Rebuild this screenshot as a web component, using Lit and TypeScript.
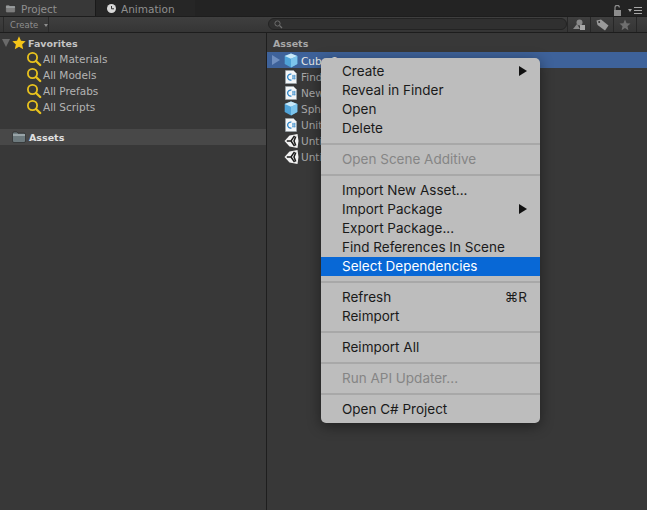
import { LitElement, css, html, svg } from 'lit'
import { customElement } from 'lit/decorators.js'

const favorites = ['All Materials', 'All Models', 'All Prefabs', 'All Scripts']

type Asset = { name: string; icon: 'cube' | 'cs' | 'unity'; selected?: boolean }

const assets: Asset[] = [
  { name: 'Cube 2', icon: 'cube', selected: true },
  { name: 'FindObjects', icon: 'cs' },
  { name: 'NewBehaviour', icon: 'cs' },
  { name: 'Sphere', icon: 'cube' },
  { name: 'UnityScript', icon: 'cs' },
  { name: 'Untitled', icon: 'unity' },
  { name: 'Untitled 2', icon: 'unity' },
]

// null = separator
type MenuItem = { label: string; disabled?: boolean; active?: boolean; arrow?: boolean; key?: string } | null

const menu: MenuItem[] = [
  { label: 'Create', arrow: true },
  { label: 'Reveal in Finder' },
  { label: 'Open' },
  { label: 'Delete' },
  null,
  { label: 'Open Scene Additive', disabled: true },
  null,
  { label: 'Import New Asset...' },
  { label: 'Import Package', arrow: true },
  { label: 'Export Package...' },
  { label: 'Find References In Scene' },
  { label: 'Select Dependencies', active: true },
  null,
  { label: 'Refresh', key: '⌘R' },
  { label: 'Reimport' },
  null,
  { label: 'Reimport All' },
  null,
  { label: 'Run API Updater...', disabled: true },
  null,
  { label: 'Open C# Project' },
]

const magnifier = html`<svg class="icon" width="16" height="16" viewBox="0 0 16 16">
  <circle cx="6.500" cy="6.500" r="4.600" fill="none" stroke="#e8c21e" stroke-width="1.800"/>
  <path d="M10 10l4.200 4" stroke="#e8c21e" stroke-width="2.400" stroke-linecap="round"/>
</svg>`

const folder = (w: number, h: number, fill: string) => svg`<svg class="icon" width=${w} height=${h} viewBox="0 0 14 12">
  <path d="M.5 2.500q0-1.500 1.500-1.500h3l1 1.200h6q1.500 0 1.500 1.300v6.500q0 1.500-1.500 1.500h-10q-1.500 0-1.500-1.500z" fill=${fill} stroke="#222" stroke-width=".6"/>
  <path d="M1 4h12" stroke="#c5cdd0" stroke-width="1"/>
</svg>`

const cube = html`<svg class="icon" width="14" height="15" viewBox="0 0 14 15">
  <path d="M7 .5l6.300 2.600v8L7 14.500.7 11.100v-8z" fill="#4fa3d8"/>
  <path d="M7 .5l6.300 2.600L7 5.800.7 3.100z" fill="#c8e8f8"/>
  <path d="M7 5.800l6.300-2.700v8L7 14.500z" fill="#7cc4ec"/>
</svg>`

const csFile = html`<svg class="icon" width="12" height="14" viewBox="0 0 12 14">
  <path d="M.5.500h8l3 3v10h-11z" fill="#f4f6f8" stroke="#9aa6ad" stroke-width=".6"/>
  <path d="M6.400 4.200a3 3 0 1 0 0 5.800" fill="none" stroke="#2e86c8" stroke-width="1.300"/>
  <path d="M7 6h3.600M7 8.200h3.600M8 4.800v4.800M9.700 4.800v4.800" stroke="#2e86c8" stroke-width=".7"/>
</svg>`

const unity = html`<svg class="icon" width="15" height="14" viewBox="0 0 15 14">
  <path d="M.5 7L5.500 1.500 13.500 0 14.500 7 13.500 14 5.500 12.500z" fill="#f2f2f2"/>
  <path d="M2.800 7H7L10.500 1.800M7 7l3.500 5.200M11.800 2.500L10 7l1.800 4.500" fill="none" stroke="#1c1c1c" stroke-width="1.500"/>
</svg>`

const assetIcons = { cube, cs: csFile, unity }

@customElement('app-root')
export class AppRoot extends LitElement {
  static styles = css`
    :host {
      display: block;
      position: relative;
      width: 647px;
      height: 510px;
      overflow: hidden;
      background: #383838;
      font-family: 'DejaVu Sans', sans-serif;
      font-size: 10.5px;
      color: #b4b4b4;
    }

    .icon {
      display: block;
      flex: none;
    }

    .tabs {
      display: flex;
      height: 16px;
      background: #232323;
    }

    .tab {
      display: flex;
      align-items: center;
      gap: 5px;
      width: 95px;
      padding: 1px 0 0 5px;
      box-sizing: border-box;
      color: #8f8f8f;
      font-size: 10.5px;
      background: #383838;
    }

    .tab.inactive {
      background: #262626;
      padding-left: 11px;
      border-left: 1px solid #1a1a1a;
      width: 100px;
    }

    .tab-tools {
      margin-left: auto;
      display: flex;
      align-items: flex-end;
      gap: 6px;
      padding-right: 5px;
    }

    .menu-lines {
      display: flex;
      align-items: center;
      gap: 2px;
      height: 8px;
      margin-bottom: 2px;
    }

    .menu-lines i {
      display: block;
      width: 8px;
      height: 5px;
      border-top: 1px solid #a8a8a8;
      border-bottom: 1px solid #a8a8a8;
      background: linear-gradient(#a8a8a8, #a8a8a8) center / 100% 1px no-repeat;
    }

    .menu-lines b {
      border: 2.500px solid transparent;
      border-top: 3px solid #a8a8a8;
      border-bottom: 0;
    }

    .toolbar {
      display: flex;
      align-items: stretch;
      height: 17px;
      box-sizing: border-box;
      background: linear-gradient(#3f3f3f, #353535);
      border-top: 1px solid #1d1d1d;
      border-bottom: 1px solid #1d1d1d;
    }

    .create {
      display: flex;
      align-items: center;
      gap: 6px;
      width: 46px;
      margin-left: 3px;
      padding-left: 6px;
      box-sizing: border-box;
      border-left: 1px solid #2a2a2a;
      border-right: 1px solid #2a2a2a;
      color: #8e8e8e;
      font-size: 8.500px;
    }

    .create i {
      border: 2.500px solid transparent;
      border-top: 3px solid #8e8e8e;
      border-bottom: 0;
      margin-top: 1px;
    }

    .search {
      display: flex;
      align-items: center;
      width: 299px;
      height: 12px;
      margin: 1px 0 0 219px;
      padding-left: 5px;
      box-sizing: border-box;
      border-radius: 7px;
      border: 1px solid #232323;
      background: #303030;
    }

    .tool {
      display: flex;
      align-items: center;
      justify-content: center;
      width: 22px;
      border-left: 1px solid #272727;
    }

    .tool:last-child {
      border-right: 1px solid #272727;
    }

    .tool:first-of-type {
      margin-left: 5px;
    }

    .body {
      display: flex;
      height: 477px;
    }

    .left {
      width: 267px;
      flex: none;
      padding-top: 2px;
      box-sizing: border-box;
      border-right: 1px solid #1e1e1e;
    }

    .row {
      display: flex;
      align-items: center;
      height: 16px;
      white-space: nowrap;
    }

    .row.favorites {
      padding-left: 2px;
      gap: 2px;
      font-weight: 700;
      font-size: 9.500px;
      color: #c4c4c4;
    }

    .triangle-down {
      border: 4px solid transparent;
      border-top: 8px solid #6a6a6a;
      border-bottom: 0;
    }

    .row.fav {
      padding-left: 26px;
      gap: 1px;
    }

    .row.root {
      margin-top: 14px;
      padding-left: 12px;
      gap: 3px;
      background: #484848;
      color: #e0e0e0;
      font-weight: 700;
      font-size: 9.500px;
    }

    .right {
      flex: 1;
      min-width: 0;
    }

    .crumb {
      height: 19px;
      padding: 4px 0 0 6px;
      box-sizing: border-box;
      line-height: 14px;
      color: #a8a8a8;
      font-weight: 700;
      font-size: 9.500px;
    }

    .asset {
      display: flex;
      align-items: center;
      gap: 3px;
      height: 16px;
      padding: 1px 0 0 17px;
      box-sizing: border-box;
      white-space: nowrap;
      color: #a6a6a6;
    }

    .slot {
      display: flex;
      justify-content: center;
      width: 14px;
      flex: none;
    }

    .asset.selected {
      position: relative;
      background: #3e629a;
      color: #e8e8e8;
    }

    .asset.selected::before {
      content: '';
      position: absolute;
      left: 5px;
      top: 3px;
      border: 5px solid transparent;
      border-left: 8px solid #6f8fc0;
      border-right: 0;
    }

    .context {
      position: absolute;
      left: 321px;
      top: 58px;
      width: 219px;
      padding: 3.500px 0 4px;
      box-sizing: border-box;
      border-radius: 5px;
      background: #bdbdbd;
      box-shadow: 0 3px 14px rgba(0, 0, 0, 0.45);
      font-family: Inter, 'Liberation Sans', sans-serif;
      font-size: 13.500px;
      color: #1a1a1a;
    }

    .item {
      display: flex;
      align-items: center;
      justify-content: space-between;
      height: 19px;
      box-sizing: border-box;
      padding: 0 13px 1px 21px;
    }

    .item.disabled {
      color: #858585;
    }

    .item.active {
      background: #0868d6;
      color: #fff;
    }

    .item i {
      border: 5px solid transparent;
      border-left: 8px solid #111;
      border-right: 0;
      margin-top: 1px;
    }

    .sep {
      height: 12px;
      display: flex;
      align-items: center;
    }

    .sep::before {
      content: '';
      flex: 1;
      height: 2px;
      background: #a8a8a8;
    }
  `

  render() {
    return html`
      <div class="tabs">
        <div class="tab">
          ${folder(11, 9, '#7d7d7d')}
          <span>Project</span>
        </div>
        <div class="tab inactive">
          <svg class="icon" width="9" height="9" viewBox="0 0 9 9">
            <circle cx="4.500" cy="4.500" r="4.500" fill="#d8d8d8"/>
            <path d="M4.500 2v2.800H7" fill="none" stroke="#333" stroke-width="1"/>
          </svg>
          <span>Animation</span>
        </div>
        <div class="tab-tools">
          <svg class="icon" width="9" height="11" viewBox="0 0 9 11">
            <rect x="1" y="5" width="7" height="6" fill="#8c8c8c"/>
            <path d="M2 5V2.500a2.200 2.200 0 0 1 4.400 0" fill="none" stroke="#8c8c8c" stroke-width="1.200"/>
          </svg>
          <div class="menu-lines"><b></b><i></i></div>
        </div>
      </div>
      <div class="toolbar">
        <div class="create"><span>Create</span><i></i></div>
        <div class="search">
          <svg class="icon" width="9" height="9" viewBox="0 0 9 9">
            <circle cx="3.500" cy="3.500" r="2.600" fill="none" stroke="#6e6e6e" stroke-width="1"/>
            <path d="M5.500 5.500L8 8" stroke="#6e6e6e" stroke-width="1.200"/>
          </svg>
        </div>
        <div class="tool">
          <svg class="icon" width="13" height="12" viewBox="0 0 13 12">
            <circle cx="6.500" cy="3.500" r="3" fill="#8a8a8a"/>
            <path d="M0 10l4-5 3 5z" fill="#8a8a8a"/>
            <rect x="7" y="6" width="5" height="5" fill="#a8a8a8"/>
          </svg>
        </div>
        <div class="tool">
          <svg class="icon" width="13" height="12" viewBox="0 0 13 12">
            <path d="M.5 1.500L5 .5l7.500 6-3.500 5L1.500 6z" fill="#9a9a9a"/>
            <circle cx="3.200" cy="3" r="1" fill="#333"/>
          </svg>
        </div>
        <div class="tool">
          <svg class="icon" width="12" height="12" viewBox="0 0 12 12">
            <path d="M6 .5l1.600 3.700 3.900.4-3 2.600.9 4L6 9.100 2.600 11.200l.9-4-3-2.600 3.900-.4z" fill="#6f6f6f"/>
          </svg>
        </div>
      </div>
      <div class="body">
        <div class="left">
          <div class="row favorites">
            <span class="triangle-down"></span>
            <svg class="icon" width="14" height="14" viewBox="0 0 12 12">
              <path d="M6 .3l1.700 3.800 4 .4-3 2.700.9 4.100L6 9.200 2.400 11.300l.9-4.100-3-2.700 4-.4z" fill="#f5c518"/>
            </svg>
            <span>Favorites</span>
          </div>
          ${favorites.map((f) => html`<div class="row fav">${magnifier}<span>${f}</span></div>`)}
          <div class="row root">
            ${folder(14, 12, '#6d7a7e')}
            <span>Assets</span>
          </div>
        </div>
        <div class="right">
          <div class="crumb">Assets</div>
          ${assets.map((a) => html`
            <div class="asset ${a.selected ? 'selected' : ''}">
              <span class="slot">${assetIcons[a.icon]}</span>
              <span>${a.name}</span>
            </div>
          `)}
        </div>
      </div>
      <div class="context">
        ${menu.map((m) => m === null
          ? html`<div class="sep"></div>`
          : html`<div class="item ${m.disabled ? 'disabled' : ''} ${m.active ? 'active' : ''}">
              <span>${m.label}</span>
              ${m.arrow ? html`<i></i>` : ''}
              ${m.key ? html`<span>${m.key}</span>` : ''}
            </div>`)}
      </div>
    `
  }
}
